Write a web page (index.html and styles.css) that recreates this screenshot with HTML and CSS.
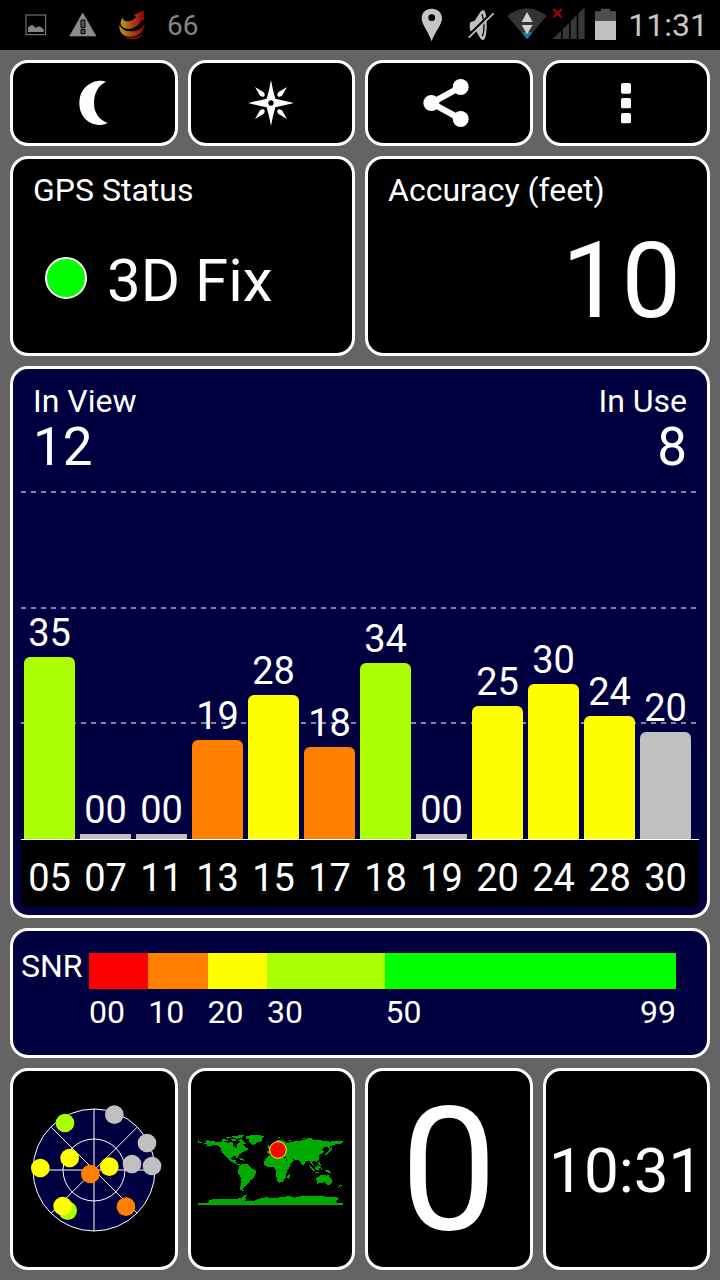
FILE: index.html
```html
<!DOCTYPE html>
<html lang="en">
<head>
  <meta charset="UTF-8" />
  <meta name="viewport" content="width=device-width, initial-scale=1.0"/>
  <title>GPS Status</title>
  <link rel="stylesheet" href="styles.css">
</head>
<body>
  <header class="status-bar">
    <div class="notifications">
      <svg width="24" height="34" viewBox="72 24 72 102">
        <rect x="78" y="45" width="59" height="59" fill="none" stroke="#858585" stroke-width="3"/>
        <path d="M84 96V82L96 74L107 83L119 79L131 88V96Z" fill="#858585"/>
      </svg>
      <svg width="28" height="34" viewBox="210 24 84 102">
        <path d="M251 39L291 108H212Z" fill="#8c8c8c" stroke="#8c8c8c" stroke-width="2" stroke-linejoin="round"/>
        <path d="M246 60H258V83H246ZM246 88H258V101H246Z" fill="#555" stroke="#000" stroke-width="3"/>
      </svg>
      <svg width="28" height="34" viewBox="354 24 84 102">
        <defs>
          <linearGradient id="flame">
            <stop offset="0" stop-color="#b5a017"/>
            <stop offset="0.5" stop-color="#a94213"/>
            <stop offset="1" stop-color="#8e0008"/>
          </linearGradient>
        </defs>
        <path d="M370 52C360 62 359 75 369 82C384 93 416 84 424 61L433 62L431 30L402 45L408 50C400 62 385 66 374 62C370 60 368 57 370 52Z" fill="url(#flame)"/>
        <path d="M358 76C357 94 367 108 385 110C410 112 432 100 434 71C425 88 407 95 389 94C374 93 364 86 358 76Z" fill="url(#flame)"/>
        <path d="M378 114C397 119 414 117 426 106C414 112 398 115 378 114Z" fill="#8e1308" stroke="#8e1308" stroke-width="2"/>
      </svg>
      <span class="temperature">66</span>
    </div>
    <div class="indicators">
      <svg width="40" height="34" viewBox="51 24 120 102">
        <path fill-rule="evenodd" d="M95 26C77 26 65 38 65 55C65 75 85 94 95 124C105 94 126 75 126 55C126 38 113 26 95 26ZM95 43A10 10 0 1 1 95 63A10 10 0 1 1 95 43Z" fill="#c6c6c6"/>
      </svg>
      <svg width="40" height="34" viewBox="186 24 120 102">
        <path d="M211 67L224 62L241 36C247 29 252 29 255 35C262 53 262 99 255 115C251 123 244 122 239 112L228 92L212 94C208 86 208 75 211 67Z" fill="#c0c0c0"/>
        <path d="M246 42C253 60 254 93 247 109" fill="none" stroke="#000" stroke-width="4"/>
        <path d="M206 106L277 37" stroke="#000" stroke-width="7"/>
        <path d="M206 113L281 40" stroke="#c0c0c0" stroke-width="5"/>
      </svg>
      <svg width="40" height="34" viewBox="322 24 120 102">
        <path d="M382 118L323 48C357 18 407 18 441 48Z" fill="#333"/>
        <path d="M382 118L367 98Q382 92 398 98Z" fill="#217a9c"/>
        <path d="M382 36L399 66H366ZM366 75H399L382 103Z" fill="#d0d0d0"/>
      </svg>
      <svg width="34" height="34" viewBox="457 24 102 102">
        <path d="M459 117L484 92V117ZM489 88L508 69V117H489ZM513 64L531 45V117H513ZM536 40L555 22V117H536Z" fill="#383838"/>
        <path d="M461 27L486 52M486 27L461 52" stroke="#b00000" stroke-width="6"/>
      </svg>
      <svg width="32" height="34" viewBox="573 24 96 102">
        <path d="M585 34H602V26H631V34H648V63H585Z" fill="#4d4d4d"/>
        <path d="M585 63H648V120H585Z" fill="#c0c0c0"/>
      </svg>
      <span class="clock">11:31</span>
    </div>
  </header>

  <main class="dashboard">
    <nav class="tile-row">
      <button type="button" class="panel tool-button" aria-label="Night mode">
        <svg width="48" height="48" viewBox="209 87 144 144">
          <path d="M317 95C304 91 290 92 278 97C252 107 237 130 237 159C237 199 265 226 302 225Q314 224 322 219C295 208 281 188 281 158C281 129 293 107 317 95Z" fill="#fff"/>
        </svg>
      </button>
      <button type="button" class="panel tool-button" aria-label="Compass">
        <svg width="48" height="48" viewBox="741 87 144 144">
          <path d="M813 90Q818 120 826 146Q853 152 882 159Q853 166 826 172Q818 200 813 228Q808 200 800 172Q773 166 744 159Q773 152 800 146Q808 120 813 90Z" fill="#fff"/>
          <path d="M765 111L790 126Q799 136 789 141L780 137ZM861 111L836 126Q827 136 837 141L846 137ZM765 207L790 192Q799 182 789 177L780 181ZM861 207L836 192Q827 182 837 177L846 181Z" fill="#fff"/>
          <circle cx="813" cy="159" r="8" fill="#000"/>
        </svg>
      </button>
      <button type="button" class="panel tool-button" aria-label="Share">
        <svg width="54" height="48" viewBox="185 87 162 144">
          <path d="M301 111L213 159L301 207" fill="none" stroke="#fff" stroke-width="18"/>
          <circle cx="301" cy="111" r="24" fill="#fff"/>
          <circle cx="213" cy="159" r="24" fill="#fff"/>
          <circle cx="301" cy="207" r="24" fill="#fff"/>
        </svg>
      </button>
      <button type="button" class="panel tool-button" aria-label="Menu">
        <svg width="48" height="48" viewBox="726 87 144 144" fill="#fff">
          <rect x="783" y="99" width="30" height="32" rx="5"/>
          <rect x="783" y="144" width="30" height="31" rx="5"/>
          <rect x="783" y="189" width="30" height="31" rx="5"/>
        </svg>
      </button>
    </nav>

    <div class="status-row">
      <section class="panel status-panel">
        <h2>GPS Status</h2>
        <div class="fix">
          <span class="fix-light"></span>
          <span class="fix-text">3D Fix</span>
        </div>
      </section>
      <section class="panel status-panel">
        <h2>Accuracy (feet)</h2>
        <div class="accuracy">10</div>
      </section>
    </div>

    <section class="panel chart-panel">
      <div class="chart-header">
        <div>
          <h2>In View</h2>
          <div class="count">12</div>
        </div>
        <div class="in-use">
          <h2>In Use</h2>
          <div class="count">8</div>
        </div>
      </div>
      <div class="plot columns">
        <div class="column"><span>35</span><div class="bar good" style="height: 182px"></div></div>
        <div class="column"><span>00</span><div class="bar empty" style="height: 5px"></div></div>
        <div class="column"><span>00</span><div class="bar empty" style="height: 5px"></div></div>
        <div class="column"><span>19</span><div class="bar weak" style="height: 99px"></div></div>
        <div class="column"><span>28</span><div class="bar fair" style="height: 144px"></div></div>
        <div class="column"><span>18</span><div class="bar weak" style="height: 92px"></div></div>
        <div class="column"><span>34</span><div class="bar good" style="height: 176px"></div></div>
        <div class="column"><span>00</span><div class="bar empty" style="height: 5px"></div></div>
        <div class="column"><span>25</span><div class="bar fair" style="height: 133px"></div></div>
        <div class="column"><span>30</span><div class="bar fair" style="height: 155px"></div></div>
        <div class="column"><span>24</span><div class="bar fair" style="height: 123px"></div></div>
        <div class="column"><span>20</span><div class="bar unused" style="height: 107px"></div></div>
      </div>
      <div class="axis columns">
        <span>05</span>
        <span>07</span>
        <span>11</span>
        <span>13</span>
        <span>15</span>
        <span>17</span>
        <span>18</span>
        <span>19</span>
        <span>20</span>
        <span>24</span>
        <span>28</span>
        <span>30</span>
      </div>
    </section>

    <section class="panel snr-panel">
      <h2>SNR</h2>
      <div class="scale">
        <div class="step ten"><div class="swatch bad"></div><span>00</span></div>
        <div class="step ten"><div class="swatch weak"></div><span>10</span></div>
        <div class="step ten"><div class="swatch fair"></div><span>20</span></div>
        <div class="step twenty"><div class="swatch good"></div><span>30</span></div>
        <div class="step rest"><div class="swatch best"></div><span>50</span><span>99</span></div>
      </div>
    </section>

    <div class="tile-row bottom-row">
      <div class="panel tile">
        <svg width="144" height="144" viewBox="34 82 432 432">
          <circle cx="250" cy="298" r="183" fill="#000040" stroke="#fff" stroke-width="3"/>
          <circle cx="250" cy="298" r="93" fill="none" stroke="#fff" stroke-width="3"/>
          <path d="M250 115V481M67 298H433M122 170L379 427M379 170L122 427" stroke="#fff" stroke-width="3"/>
          <circle cx="163" cy="157" r="28" fill="#aaff00"/>
          <circle cx="171" cy="420" r="28" fill="#aaff00"/>
          <circle cx="311" cy="132" r="28" fill="#c0c0c0"/>
          <circle cx="409" cy="217" r="28" fill="#c0c0c0"/>
          <circle cx="364" cy="280" r="28" fill="#c0c0c0"/>
          <circle cx="424" cy="286" r="28" fill="#c0c0c0"/>
          <circle cx="177" cy="262" r="28" fill="#ffff00"/>
          <circle cx="89" cy="292" r="28" fill="#ffff00"/>
          <circle cx="296" cy="288" r="28" fill="#ffff00"/>
          <circle cx="156" cy="406" r="28" fill="#ffff00"/>
          <circle cx="239" cy="310" r="28" fill="#ff8000"/>
          <circle cx="346" cy="408" r="28" fill="#ff8000"/>
        </svg>
      </div>
      <div class="panel tile">
        <svg width="150" height="74" viewBox="30 39 450 222">
          <g fill="#00aa00" shape-rendering="crispEdges">
            <!-- americas -->
            <path d="M36 60H40V66H48V69H36ZM53 70L60 67L56 64L66 61L84 64L100 66L112 64L126 68L138 66L142 70L140 77L148 84L154 82L152 74L160 66L168 68L174 76L180 82L188 88L178 92L170 97L160 103L156 110L153 116L148 108L140 109L136 116L142 121L149 119L148 125L156 132L163 133L158 136L146 130L132 123L124 112L114 104L107 95L105 84L96 77L84 75L72 78L60 80L66 74Z"/>
            <path d="M104 60L112 56L120 58L126 62L112 63ZM118 52L132 50L136 54L124 56ZM136 58L148 57L152 63L140 63ZM154 60L166 58L176 66L180 72L172 71L162 65ZM138 49L160 46L176 46L168 53L154 56L142 54Z"/>
            <path d="M178 50L194 46L216 45L234 48L228 56L226 64L214 67L202 75L196 73L190 66L188 58L180 55ZM156 114L166 115L176 119L172 122L162 118Z"/>
            <path d="M163 134L172 131L184 133L192 139L198 146L212 153L208 163L202 174L193 182L187 190L179 197L174 202L170 206L174 212L164 211L162 204L166 191L165 174L158 162L154 153L158 145Z"/>
            <!-- africa and europe -->
            <path d="M235 125L240 114L248 107L264 103L274 108L288 108L298 114L304 127L314 136L304 151L301 162L299 174L291 184L279 189L274 181L271 168L271 155L265 142L254 142L240 139L234 132ZM305 166L314 161L312 170L307 178L304 173Z"/>
            <path d="M244 93L254 91L254 86L248 82L258 78L266 67L278 59L293 62L300 68L320 67L330 62L342 62L358 58L372 52L382 59L404 61L432 65L448 62L471 63V68L461 72L449 73L434 78L429 87L424 81L414 82L408 88L414 94L405 102L398 108L399 119L393 126L384 123L379 127L383 137L376 133L371 123L362 123L350 137L345 131L342 122L331 120L320 118L325 121L311 135L304 126L300 113L290 106L298 101L286 103L277 96L267 103L255 103L244 100Z"/>
            <path d="M244 78L250 75L253 86L246 88ZM270 51L286 50L280 54ZM310 61L317 57L312 65ZM348 54L362 53L354 57ZM430 89L437 82L439 86L426 102L412 107L422 100ZM239 66L248 65L246 69Z"/>
            <!-- oceania -->
            <path d="M370 136L378 143L388 153L383 154L374 146ZM387 143L398 135L402 142L397 150L389 149ZM403 142L409 145L405 153ZM388 155L402 158L400 161L387 158ZM398 123L402 130L406 137L402 138L397 130ZM418 149L430 151L436 159L424 157L416 153Z"/>
            <path d="M391 175L400 168L409 164L417 164L423 168L426 162L432 172L438 179L438 187L430 197L424 194L415 187L403 189L393 191ZM426 197L432 197L429 201ZM462 193L468 196L457 204L458 200Z"/>
            <!-- antarctica -->
            <path d="M36 249H66L70 240L94 236L120 238L150 236L164 235L176 226L184 221L178 231L180 238L174 244H202L220 236L240 232L266 234L292 231L310 228L326 233L346 227L376 229L402 227L424 231L448 231L460 235L450 244L454 249H471V255H36Z"/>
          </g>
          <circle cx="276" cy="90" r="25" fill="#ff0000" stroke="#ffff00" stroke-width="3"/>
        </svg>
      </div>
      <div class="panel tile speed">0</div>
      <div class="panel tile time">10:31</div>
    </div>
  </main>
</body>
</html>
```
FILE: styles.css
```css
* {
  box-sizing: border-box;
}
body {
  font-family: Roboto, "Liberation Sans", sans-serif;
  font-size: 32px;
  background: #646464;
  color: #fff;
  margin: 0;
  min-height: 100vh;
  display: flex;
  flex-direction: column;
}
h2 {
  margin: 0;
  font-size: 32px;
  font-weight: normal;
  line-height: 38px;
}
svg {
  display: block;
  flex: none;
}

/* status bar */
.status-bar {
  height: 50px;
  padding: 0 12px 0 24px;
  background: #000;
  display: flex;
  justify-content: space-between;
  align-items: center;
}
.notifications, .indicators {
  display: flex;
  align-items: center;
}
.notifications {
  gap: 21px;
}
.indicators {
  gap: 5px;
}
.temperature {
  font-size: 28px;
  color: #858585;
}
.clock {
  color: #c6c6c6;
}

/* panels */
.dashboard {
  flex: 1;
  padding: 10px;
  display: flex;
  flex-direction: column;
  gap: 10px;
}
.panel {
  background: #000;
  border: 3px solid #fff;
  border-radius: 18px;
}
.tile-row {
  display: grid;
  grid-template-columns: repeat(4, minmax(0, 1fr));
  gap: 10px;
}
.tool-button {
  height: 86px;
  padding: 0;
  display: flex;
  justify-content: center;
  align-items: center;
  cursor: pointer;
}
.status-row {
  display: grid;
  grid-template-columns: 1fr 1fr;
  gap: 10px;
}
.status-panel {
  height: 200px;
  padding: 12px 20px 0;
  display: flex;
  flex-direction: column;
}
.fix, .accuracy {
  flex: 1;
  display: flex;
  align-items: center;
}
.fix {
  gap: 20px;
  padding-left: 12px;
}
.fix-light {
  width: 42px;
  height: 42px;
  margin-bottom: 6px;
  border: 2px solid #fff;
  border-radius: 50%;
  background: #00ff00;
}
.fix-text {
  font-size: 60px;
  line-height: 72px;
}
.accuracy {
  justify-content: flex-end;
  padding-right: 6px;
  font-size: 106px;
  line-height: 106px;
}

/* satellite chart */
.chart-panel {
  background: #000040;
  padding: 8px;
}
.chart-header {
  display: flex;
  justify-content: space-between;
  padding: 5px 12px 17px;
}
.chart-header h2 {
  line-height: 38px;
}
.in-use {
  text-align: right;
}
.count {
  font-size: 53px;
  line-height: 54px;
}
.columns {
  display: grid;
  grid-template-columns: repeat(12, minmax(0, 1fr));
  column-gap: 5px;
  padding: 0 8px 0 3px;
  font-size: 38px;
  text-align: center;
}
.plot {
  --dashes: repeating-linear-gradient(90deg, #8484a8 0 5px, transparent 5px 10px);
  height: 348px;
  background-image: var(--dashes), var(--dashes), var(--dashes);
  background-size: 100% 2px;
  background-position: 0 0, 0 116px, 0 231px;
  background-repeat: no-repeat;
}
.column {
  display: flex;
  flex-direction: column;
  justify-content: flex-end;
}
.column span {
  line-height: 48px;
}
.bar {
  border-radius: 6px 6px 0 0;
}
.bar.empty {
  border-radius: 0;
}
.axis {
  height: 68px;
  background: #000;
  border-top: 1px solid #fff;
  line-height: 77px;
}

/* signal colours */
.bad {
  background: #ff0000;
}
.weak {
  background: #ff8000;
}
.fair {
  background: #ffff00;
}
.good {
  background: #aaff00;
}
.best {
  background: #00ff00;
}
.unused, .empty {
  background: #c0c0c0;
}

/* snr legend */
.snr-panel {
  height: 130px;
  padding: 22px 31px 0 8px;
  background: #000040;
  display: flex;
}
.snr-panel h2 {
  width: 68px;
  line-height: 26px;
}
.scale {
  flex: 1;
  display: flex;
  line-height: 46px;
}
.step {
  display: flex;
  flex-wrap: wrap;
  justify-content: space-between;
  align-content: flex-start;
  flex-basis: 0;
}
.ten {
  flex-grow: 10;
}
.twenty {
  flex-grow: 20;
}
.rest {
  flex-grow: 49;
}
.swatch {
  width: 100%;
  height: 36px;
}

/* bottom tiles */
.bottom-row {
  flex: 1;
}
.tile {
  min-height: 200px;
  padding-top: 2px;
  display: flex;
  justify-content: center;
  align-items: center;
  overflow: hidden;
}
.speed {
  font-size: 172px;
  line-height: 172px;
}
.time {
  font-size: 62px;
}
```
